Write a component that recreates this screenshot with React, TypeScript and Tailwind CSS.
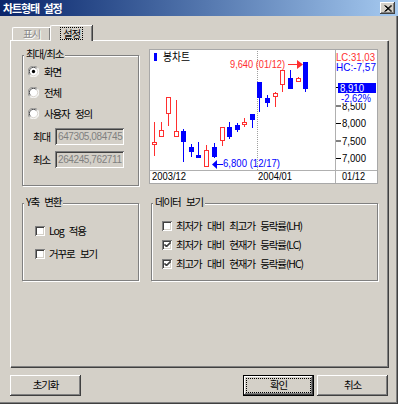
import React from 'react';

type C = [number, number, number, number, number, 'r' | 'b'];
const candles: C[] = [
  [6, 93, 96, 73, 107, 'r'],
  [13, 81, 88, 73, 88, 'r'],
  [20, 48, 65, 48, 77, 'r'],
  [28, 82, 88, 51, 88, 'r'],
  [35, 82, 93, 80, 113, 'b'],
  [43, 98, 103, 95, 108, 'b'],
  [50, 106, 109, 93, 109, 'b'],
  [58, 101, 118, 96, 118, 'r'],
  [66, 98, 108, 94, 109, 'b'],
  [74, 78, 92, 78, 97, 'r'],
  [81, 78, 88, 73, 90, 'b'],
  [89, 76, 81, 74, 83, 'b'],
  [96, 73, 76, 69, 78, 'r'],
  [104, 65, 71, 65, 79, 'b'],
  [111, 33, 49, 33, 63, 'b'],
  [119, 49, 54, 46, 58, 'b'],
  [127, 44, 48, 43, 58, 'r'],
  [134, 21, 36, 21, 43, 'r'],
  [142, 29, 40, 21, 40, 'b'],
  [150, 29, 33, 28, 33, 'r'],
  [157, 13, 40, 13, 43, 'b'],
];

const RED = '#ff2f2f';
const BLUE = '#0000ff';

function T({ x, y, w, fill, children, size = 11 }: { x: number; y: number; w?: number; fill: string; children: React.ReactNode; size?: number }) {
  return (
    <text
      x={x}
      y={y}
      fill={fill}
      fontSize={size}
      fontFamily="'Liberation Sans', Arial, sans-serif"
      {...(w ? { textLength: w, lengthAdjust: 'spacingAndGlyphs' } : {})}
    >
      {children}
    </text>
  );
}

function Chart() {
  const ticks: [number, string][] = [
    [38, '9,000'],
    [56.5, '8,500'],
    [74, '8,000'],
    [91.5, '7,500'],
    [109, '7,000'],
  ];
  return (
    <div className="w-[229px] h-[135px] bg-white border border-[#a8a8a8] tracking-normal [word-spacing:0px]">
      <svg width="227" height="133" viewBox="1 1 227 133" className="block">
        <line x1="108.5" y1="0" x2="108.5" y2="121" stroke="#a0a0a0" strokeDasharray="1 1" />
        <line x1="186.5" y1="0" x2="186.5" y2="135" stroke="#b0b0b0" />
        <line x1="0" y1="121.5" x2="229" y2="121.5" stroke="#b0b0b0" />
        <rect x="5" y="4" width="3" height="8" fill={BLUE} />
        <text x="14" y="12" fontSize="11" fill="#000" fontFamily="'Noto Sans CJK KR', sans-serif" textLength="27" lengthAdjust="spacingAndGlyphs">봉차트</text>
        {candles.map(([cx, bt, bb, wt, wb, c], i) => (
          <g key={i}>
            <line x1={cx - 0.5} y1={wt} x2={cx - 0.5} y2={wb} stroke={c === 'r' ? RED : BLUE} />
            {c === 'r' ? (
              <rect x={cx - 2.5} y={bt + 0.5} width={4} height={bb - bt - 1} fill="#fff" stroke={RED} />
            ) : (
              <rect x={cx - 3} y={bt} width={5} height={bb - bt} fill={BLUE} />
            )}
          </g>
        ))}
        <T x={81} y={19} w={55} fill={RED}>9,640 (01/12)</T>
        <line x1="139" y1="15.5" x2="149" y2="15.5" stroke={RED} />
        <polygon points="148,11 154,15.5 148,20" fill={RED} />
        <T x={74} y={118} w={57} fill={BLUE}>6,800 (12/17)</T>
        <line x1="66" y1="115.5" x2="74" y2="115.5" stroke={BLUE} />
        <polygon points="63,115.5 68,111 68,120" fill={BLUE} />
        {ticks.map(([y, l]) => (
          <g key={l}>
            <line x1="187" y1={y + 0.5} x2="192" y2={y + 0.5} stroke="#000" />
            <T x={193} y={y + 4} w={24} fill="#000">{l}</T>
          </g>
        ))}
        <T x={187} y={12} w={39} fill={RED}>LC:31,03</T>
        <T x={187} y={22} w={40} fill={BLUE}>HC:-7,57</T>
        <rect x="189" y="34" width="38" height="10" fill={BLUE} />
        <T x={191} y={43} w={24} fill="#fff">8,910</T>
        <rect x="190" y="45" width="34" height="9" fill="#fff" />
        <T x={192} y={53} w={30} fill={BLUE}>-2,62%</T>
        <T x={3} y={131} w={34} fill="#000">2003/12</T>
        <T x={109} y={131} w={34} fill="#000">2004/01</T>
        <T x={193} y={131} w={23} fill="#000">01/12</T>
      </svg>
    </div>
  );
}

function Group({ title, className, children }: { title: string; className: string; children?: React.ReactNode }) {
  return (
    <div className={`relative border border-[#808080] shadow-[inset_1px_1px_#ffffff,1px_1px_#ffffff] ${className}`}>
      <span className="absolute left-[1px] -top-[9px] bg-[#d4d0c8] px-[2px] leading-[14px] whitespace-nowrap">{title}</span>
      {children}
    </div>
  );
}

function Radio({ checked }: { checked?: boolean }) {
  return (
    <svg width="11" height="11" viewBox="0 0 12 12" className="shrink-0">
      <circle cx="6" cy="6" r="5.5" fill="#fff" />
      <path d="M10.2 1.8 A5.5 5.5 0 0 0 1.8 10.2" fill="none" stroke="#808080" />
      <path d="M1.8 10.2 A5.5 5.5 0 0 0 10.2 1.8" fill="none" stroke="#ffffff" />
      <path d="M9.2 2.8 A4.5 4.5 0 0 0 2.8 9.2" fill="none" stroke="#404040" />
      <path d="M2.8 9.2 A4.5 4.5 0 0 0 9.2 2.8" fill="none" stroke="#d4d0c8" />
      {checked && <circle cx="6" cy="6" r="1.8" fill="#000" />}
    </svg>
  );
}

function Check({ checked }: { checked?: boolean }) {
  return (
    <div className="w-[10px] h-[10px] shrink-0 bg-white shadow-[inset_1px_1px_#808080,inset_-1px_-1px_#ffffff,inset_2px_2px_#404040,inset_-2px_-2px_#d4d0c8] flex items-center justify-center">
      {checked && (
        <svg width="7" height="7" viewBox="0 0 7 7">
          <path d="M0.5 3 L2.5 5 L6.5 1 M0.5 4 L2.5 6 L6.5 2" fill="none" stroke="#000" strokeWidth="1" />
        </svg>
      )}
    </div>
  );
}

function Button({ label, def }: { label: string; def?: boolean }) {
  if (def) {
    return (
      <div className="w-[71px] h-[21px] border border-black">
        <div className="w-full h-full shadow-[inset_-1px_-1px_#404040,inset_1px_1px_#ffffff,inset_-2px_-2px_#808080] flex items-center justify-center p-[2px]">
          <div className="w-full h-full border border-dotted border-black flex items-center justify-center leading-none">{label}</div>
        </div>
      </div>
    );
  }
  return (
    <div className="w-[71px] h-[21px] shadow-[inset_-1px_-1px_#404040,inset_1px_1px_#ffffff,inset_-2px_-2px_#808080,inset_2px_2px_#d4d0c8] flex items-center justify-center leading-none">
      {label}
    </div>
  );
}

export default function App() {
  return (
    <div className="w-[398px] h-[404px] bg-[#d4d0c8] flex flex-col overflow-hidden font-['Noto_Sans_CJK_KR',sans-serif] text-[10.5px] tracking-[-1.1px] [word-spacing:4px] text-black">
      {/* Title bar */}
      <div className="h-[16px] shrink-0 flex items-center justify-between pl-[3px] pr-[3px] bg-linear-to-r from-[#0a246a] to-[#a6caf0]">
        <span className="text-white font-bold leading-none text-[11px] [word-spacing:3px]">차트형태 설정</span>
        <div className="w-[15px] h-[12px] bg-[#d4d0c8] shadow-[inset_-1px_-1px_#404040,inset_1px_1px_#ffffff,inset_-2px_-2px_#808080] flex items-center justify-center">
          <svg width="8" height="7" viewBox="0 0 8 7">
            <path d="M0.5 0.5 L7 6.5 M1.5 0.5 L8 6.5 M7 0.5 L0.5 6.5 M8 0.5 L1.5 6.5" stroke="#000" strokeWidth="1" />
          </svg>
        </div>
      </div>
      {/* Body */}
      <div className="flex-1 flex flex-col px-[10px] shadow-[inset_-1px_-1px_#404040,inset_-2px_-2px_#808080]">
        <div className="mt-[9px] h-[15px] flex items-end pl-[2px] relative z-10">
          <div className="w-[38px] h-[13px] border-t border-l border-white shadow-[inset_-1px_0_#808080,1px_0_#404040] rounded-tl-[2px] flex items-center justify-center text-[#8a8a8a] [text-shadow:1px_1px_#ffffff] leading-none">
            표시
          </div>
          <div className="w-[42px] h-[16px] -mb-[1px] bg-[#d4d0c8] border-t border-l border-white shadow-[inset_-1px_0_#808080,1px_0_#404040] rounded-tl-[2px] flex items-center justify-center pb-[1px]">
            <span className="border border-dotted border-black px-[2px] leading-[11px]">설정</span>
          </div>
        </div>
        <div className="h-[327px] border-t border-l border-white shadow-[inset_-1px_-1px_#808080,1px_1px_#404040] flex flex-col pl-[11px] pt-[8px]">
          <div className="flex items-start">
            <Group title="최대/최소" className="mt-[6px] w-[117px] h-[131px]">
              <div className="flex flex-col pt-[5px] pl-[5px]">
                <div className="h-[21px] flex items-center gap-[5px]"><Radio checked /><span>화면</span></div>
                <div className="h-[21px] flex items-center gap-[5px]"><Radio /><span>전체</span></div>
                <div className="h-[21px] flex items-center gap-[5px]"><Radio /><span>사용자 정의</span></div>
                <div className="mt-[4px] h-[17px] flex items-center">
                  <span className="w-[27px] pl-[5px]">최대</span>
                  <div className="w-[69px] h-[17px] shadow-[inset_1px_1px_#808080,inset_-1px_-1px_#ffffff,inset_2px_2px_#404040,inset_-2px_-2px_#d4d0c8] overflow-hidden pl-[3px] flex items-center text-[10px] tracking-[-0.4px] text-[#808080] font-['Liberation_Sans',sans-serif]">647305,084745</div>
                </div>
                <div className="mt-[6px] h-[17px] flex items-center">
                  <span className="w-[27px] pl-[5px]">최소</span>
                  <div className="w-[69px] h-[17px] shadow-[inset_1px_1px_#808080,inset_-1px_-1px_#ffffff,inset_2px_2px_#404040,inset_-2px_-2px_#d4d0c8] overflow-hidden pl-[3px] flex items-center text-[10px] tracking-[-0.4px] text-[#808080] font-['Liberation_Sans',sans-serif]">264245,762711</div>
                </div>
              </div>
            </Group>
            <div className="ml-[10px]">
              <Chart />
            </div>
          </div>
          <div className="flex mt-[17px]">
            <Group title="Y축 변환" className="w-[117px] h-[78px]">
              <div className="flex flex-col pt-[15px] pl-[12px]">
                <div className="h-[23px] flex items-center gap-[4px]"><Check /><span>Log 적용</span></div>
                <div className="h-[23px] flex items-center gap-[4px]"><Check /><span>거꾸로 보기</span></div>
              </div>
            </Group>
            <Group title="데이터 보기" className="ml-[12px] w-[227px] h-[78px]">
              <div className="flex flex-col pt-[12px] pl-[10px]">
                <div className="h-[19px] flex items-center gap-[4px]"><Check /><span>최저가 대비 최고가 등락률(LH)</span></div>
                <div className="h-[19px] flex items-center gap-[4px]"><Check checked /><span>최저가 대비 현재가 등락률(LC)</span></div>
                <div className="h-[19px] flex items-center gap-[4px]"><Check checked /><span>최고가 대비 현재가 등락률(HC)</span></div>
              </div>
            </Group>
          </div>
        </div>
        <div className="mt-[8px] flex items-center">
          <Button label="초기화" />
          <div className="flex-1" />
          <Button label="확인" def />
          <div className="w-[3px]" />
          <Button label="취소" />
        </div>
      </div>
    </div>
  );
}
